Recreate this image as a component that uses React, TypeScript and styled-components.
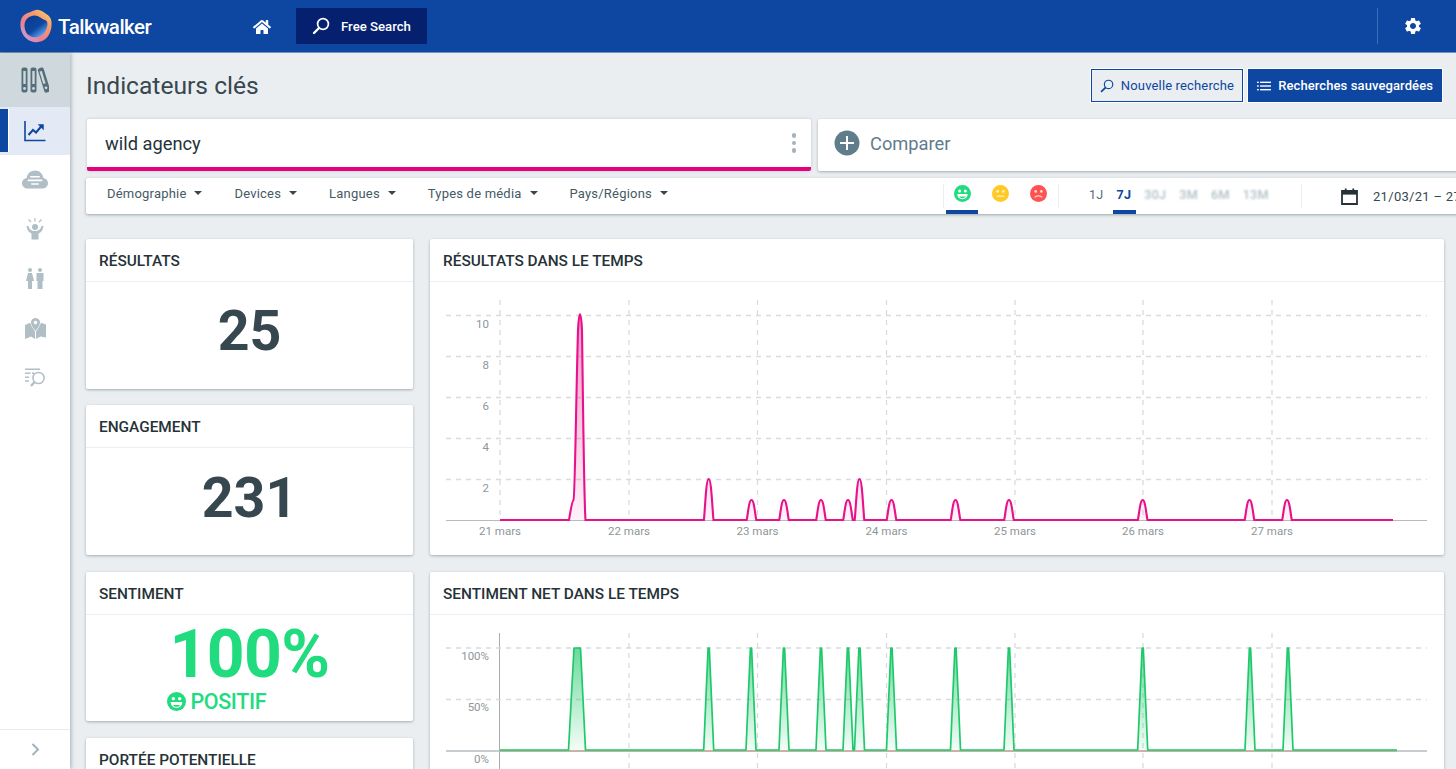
import React from "react";
import styled, { createGlobalStyle } from "styled-components";
import { FaHome } from "react-icons/fa";
import { MdSettings } from "react-icons/md";

const Global = createGlobalStyle`
  html, body { margin: 0; padding: 0; height: 100%; overflow: hidden; }
  body { font-family: Roboto, "Liberation Sans", sans-serif; background: #eaeef1; }
  * { box-sizing: border-box; }
`;

const Page = styled.div`
  width: 1456px;
  height: 769px;
  overflow: hidden;
  display: flex;
  flex-direction: column;
`;
const TopBar = styled.header`
  flex: none;
  height: 53px;
  background: #0d47a1;
  border-bottom: 1px solid #6f93c8;
  display: flex;
  align-items: center;
  color: #fff;
`;
const Brand = styled.div`
  width: 253px;
  display: flex;
  align-items: center;
  padding-left: 20px;
  gap: 6px;
`;
const BrandName = styled.span`
  font-size: 20.5px;
  font-weight: 500;
  letter-spacing: -0.5px;
  margin-top: 1px;
`;
const HomeLink = styled.div`
  width: 43px;
  display: flex;
  margin-top: 1px;
`;
const FreeSearch = styled.div`
  width: 131px;
  height: 36px;
  background: #04206f;
  display: flex;
  align-items: center;
  padding-left: 16px;
  gap: 11px;
  font-size: 13.2px;
  font-weight: 500;
`;
const TopRight = styled.div`
  margin-left: auto;
  width: 79px;
  height: 36px;
  border-left: 1px solid #3b6fbd;
  display: flex;
  align-items: center;
  padding-left: 25px;
`;
const Body = styled.div`
  flex: 1;
  display: flex;
  min-height: 0;
`;
const Sidebar = styled.nav`
  flex: none;
  width: 70px;
  background: #fff;
  box-shadow: 1px 0 4px rgba(60, 75, 85, 0.4);
  display: flex;
  flex-direction: column;
  z-index: 1;
`;
const LibraryItem = styled.div`
  height: 54px;
  background: #cfd8dc;
  display: flex;
  align-items: center;
  justify-content: center;
`;
const NavItem = styled.div<{ $active?: boolean }>`
  position: relative;
  height: ${(p) => (p.$active ? "48px" : "49.5px")};
  background: ${(p) => (p.$active ? "#e3eaf5" : "#fff")};
  display: flex;
  align-items: center;
  justify-content: center;
  ${(p) =>
    p.$active &&
    `&::before { content: ""; position: absolute; left: 0; top: 2px; width: 8px; height: 43px; background: #0d47a1; box-shadow: 1px 0 0 #fff; }`}
`;
const SideFoot = styled.div`
  margin-top: auto;
  height: 40px;
  border-top: 1px solid #e8ebed;
  display: flex;
  align-items: center;
  justify-content: center;
`;
const Main = styled.main`
  flex: 1;
  min-width: 0;
  overflow: hidden;
  padding: 16px 12px 0 16px;
`;
const TitleRow = styled.div`
  display: flex;
  align-items: center;
  justify-content: space-between;
  height: 33px;
  padding-right: 2px;
`;
const Title = styled.h1`
  margin: 0;
  font-size: 24.6px;
  font-weight: 400;
  color: #37474f;
`;
const Actions = styled.div`
  display: flex;
  gap: 5px;
`;
const ActionButton = styled.div<{ $solid?: boolean }>`
  height: 33px;
  display: flex;
  align-items: center;
  gap: 7px;
  padding: 0 8px;
  font-size: 13px;
  letter-spacing: ${(p) => (p.$solid ? "0.1px" : "0.15px")};
  font-weight: ${(p) => (p.$solid ? 500 : 400)};
  color: ${(p) => (p.$solid ? "#fff" : "#0d47a1")};
  background: ${(p) => (p.$solid ? "#0d47a1" : "transparent")};
  border: 1px solid #0d47a1;
  box-shadow: 0 0 0 1px #fff;
`;
const QueryRow = styled.div`
  margin-top: 17px;
  width: 1500px;
  display: flex;
  gap: 7px;
  padding-left: 1px;
`;
const QueryCard = styled.div`
  width: 724px;
  height: 52px;
  background: #fff;
  border-bottom: 4px solid #e6007e;
  border-radius: 2px;
  box-shadow: 0 0 3px rgba(60, 75, 85, 0.25);
  display: flex;
  align-items: center;
  justify-content: space-between;
  padding: 0 15px 0 18px;
  font-size: 18.3px;
  color: #263238;
`;
const Dots = styled.div`
  display: flex;
  flex-direction: column;
  gap: 3px;
  & > i { display: block; width: 4.5px; height: 4.5px; border-radius: 50%; background: #a3b3bc; }
`;
const CompareCard = styled.div`
  flex: 1;
  height: 52px;
  background: #fff;
  border-radius: 2px;
  box-shadow: 0 1px 3px rgba(60, 75, 85, 0.4);
  display: flex;
  align-items: center;
  gap: 10px;
  padding: 0 0 4px 16px;
  font-size: 18.3px;
  color: #607d8b;
`;
const FilterBar = styled.div`
  margin-top: 7px;
  width: 1500px;
  height: 36px;
  background: #fff;
  border-radius: 2px;
  box-shadow: 0 1px 3px rgba(60, 75, 85, 0.45);
  display: flex;
  align-items: stretch;
`;
const FilterList = styled.div`
  width: 857px;
  padding: 0 0 6px 21px;
  display: flex;
  align-items: center;
  gap: 32px;
`;
const Filter = styled.div`
  display: flex;
  align-items: center;
  gap: 8px;
  font-size: 13px;
  letter-spacing: 0.2px;
  color: #455a64;
  &::after {
    content: "";
    border-left: 4px solid transparent;
    border-right: 4px solid transparent;
    border-top: 4.5px solid #37474f;
  }
`;
const Section = styled.div<{ $w: number; $divider?: boolean }>`
  width: ${(p) => p.$w}px;
  display: flex;
  align-items: center;
  position: relative;
  ${(p) => p.$divider && `&::before { content: ""; position: absolute; left: 0; top: 6px; bottom: 6px; width: 1px; background: #eceff1; }`}
`;
const Smiley = styled.div<{ $on?: boolean }>`
  position: relative;
  width: 38px;
  height: 100%;
  display: flex;
  align-items: center;
  justify-content: center;
  padding-bottom: 6px;
  ${(p) =>
    p.$on &&
    `&::after { content: ""; position: absolute; left: 3px; right: 3px; bottom: 0; height: 4px; background: #0d47a1; }`}
`;
const Range = styled.div<{ $on?: boolean; $off?: boolean }>`
  position: relative;
  height: 100%;
  display: flex;
  align-items: center;
  padding-bottom: 4px;
  font-size: 12.5px;
  letter-spacing: 0.3px;
  font-weight: ${(p) => (p.$on ? 700 : p.$off ? 500 : 400)};
  color: ${(p) => (p.$on ? "#0d47a1" : p.$off ? "#b0bec5" : "#546e7a")};
  ${(p) =>
    p.$on &&
    `&::after { content: ""; position: absolute; left: -4px; right: -5px; bottom: 0; height: 4px; background: #0d47a1; }`}
`;
const BlurText = styled.span`
  filter: blur(1px);
`;
const Ranges = styled.div`
  height: 100%;
  display: flex;
  gap: 13px;
  padding-left: 31px;
`;
const DateText = styled.span`
  font-size: 13px;
  letter-spacing: 0.3px;
  color: #37474f;
  margin-left: 15px;
  margin-top: 1px;
  white-space: nowrap;
`;
const DateBox = styled(Section)`
  padding-left: 40px;
`;
const Dashboard = styled.div`
  margin-top: 25px;
  display: grid;
  grid-template-columns: 327px 1014px;
  column-gap: 17px;
  align-items: start;
`;
const Column = styled.div`
  display: flex;
  flex-direction: column;
  gap: 16.67px;
`;
const Card = styled.section<{ $h: number }>`
  height: ${(p) => p.$h}px;
  background: #fff;
  border-radius: 2px;
  box-shadow: 0 1px 3px rgba(60, 75, 85, 0.4);
  display: flex;
  flex-direction: column;
  overflow: hidden;
`;
const CardHead = styled.h2`
  flex: none;
  margin: 0;
  height: 43px;
  padding: 2px 13px 0;
  display: flex;
  align-items: center;
  border-bottom: 1px solid #eceff1;
  font-size: 15.4px;
  font-weight: 500;
  color: #263238;
  white-space: nowrap;
`;
const Metric = styled.div`
  flex: 1;
  display: flex;
  align-items: center;
  justify-content: center;
  padding-bottom: 7px;
  font-size: 55.5px;
  font-weight: 700;
  color: #37474f;
`;
const SentimentBody = styled.div`
  flex: 1;
  display: flex;
  justify-content: center;
`;
const SentimentStack = styled.div`
  color: #21dc7f;
  display: flex;
  flex-direction: column;
`;
const SentimentValue = styled.div`
  font-size: 66px;
  font-weight: 700;
  line-height: 68px;
  margin-top: 6px;
  letter-spacing: -0.6px;
`;
const SentimentLabel = styled.div`
  display: flex;
  align-items: center;
  gap: 5px;
  margin: 0 0 0 -3px;
  font-size: 21.5px;
  font-weight: 500;
  line-height: 26px;
  letter-spacing: -0.4px;
`;
const ChartSvg = styled.svg`
  display: block;
  flex: none;
`;
const AxisText = styled.text<{ $anchor?: string }>`
  font-family: Roboto, "Liberation Sans", sans-serif;
  font-size: 11.5px;
  fill: #8e9698;
  text-anchor: ${(p) => p.$anchor || "end"};
`;

const gridX = [500, 629, 757.5, 886.5, 1015, 1143, 1272];
const xLabels = ["21 mars", "22 mars", "23 mars", "24 mars", "25 mars", "26 mars", "27 mars"];

function bell(x: number, top: number, base: number) {
  const h = base - top;
  return `L${x - 4.8} ${base} C${x - 3.4} ${base - h * 0.35},${x - 2.6} ${top},${x} ${top} C${x + 2.6} ${top},${x + 3.4} ${base - h * 0.35},${x + 4.8} ${base} `;
}
function spike(x: number, top: number, base: number) {
  return `L${x - 5} ${base} C${x - 3.6} ${base - 30},${x - 1.6} ${top + 18},${x - 0.6} ${top} L${x + 0.6} ${top} C${x + 1.6} ${top + 18},${x + 3.6} ${base - 30},${x + 5} ${base} `;
}

const pinkBase = 520;
const pinkPeaks: [number, number][] = [
  [708.7, 479], [751.5, 500], [784, 500], [821, 500], [848, 500], [859.5, 479],
  [891.5, 500], [955.5, 500], [1009, 500], [1142.7, 500], [1249.5, 500], [1287, 500],
];
const pinkPath =
  `M500 ${pinkBase} L569 ${pinkBase} C571 508,572 501,573.5 500 C575 498,576 400,578 330 C579 309,581 309,582 330 C583 400,584 500,585.5 ${pinkBase} ` +
  pinkPeaks.map(([x, t]) => bell(x, t, pinkBase)).join("") +
  `L1393 ${pinkBase}`;

const greenBase = 750;
const greenPeaks = [708.7, 751, 784, 821, 848, 859.5, 891.5, 955.5, 1009, 1142.7, 1250, 1288];
const greenPath =
  `M500 ${greenBase} L568.5 ${greenBase} L574 648 L580.5 648 L585.5 ${greenBase} ` +
  greenPeaks.map((x) => spike(x, 648, greenBase)).join("") +
  `L1397 ${greenBase}`;

const GridLine: React.FC<{ x1: number; y1: number; x2: number; y2: number }> = (p) => (
  <line {...p} stroke="#d8dcde" strokeWidth={1.3} strokeDasharray="5 5" />
);

const ResultsChart = () => (
  <ChartSvg width={1014} height={273} viewBox="430 282 1014 273">
    <defs>
      <linearGradient id="pinkFill" x1="0" y1="0" x2="0" y2="1">
        <stop offset="0" stopColor="#e6007e" stopOpacity={0.4} />
        <stop offset="1" stopColor="#e6007e" stopOpacity={0.05} />
      </linearGradient>
    </defs>
    {gridX.map((x) => (
      <GridLine key={x} x1={x} y1={300} x2={x} y2={520} />
    ))}
    {[315.5, 356.5, 397.5, 438.5, 479.5].map((y) => (
      <GridLine key={y} x1={446} y1={y} x2={1427} y2={y} />
    ))}
    <line x1={446} y1={520.5} x2={1427} y2={520.5} stroke="#b4bcc0" strokeWidth={1.2} />
    {["10", "8", "6", "4", "2"].map((t, i) => (
      <AxisText key={t} x={489} y={327.5 + i * 41}>{t}</AxisText>
    ))}
    {gridX.map((x, i) => (
      <AxisText key={x} x={x} y={535} $anchor="middle">{xLabels[i]}</AxisText>
    ))}
    <path d={pinkPath + ` L500 ${pinkBase} Z`} fill="url(#pinkFill)" />
    <path d={pinkPath} fill="none" stroke="#e9118a" strokeWidth={2.1} />
  </ChartSvg>
);

const SentimentChart = () => (
  <ChartSvg width={1014} height={273} viewBox="430 615 1014 273">
    <defs>
      <linearGradient id="greenFill" gradientUnits="userSpaceOnUse" x1="0" y1="648" x2="0" y2="750">
        <stop offset="0" stopColor="#1bc667" stopOpacity={0.65} />
        <stop offset="1" stopColor="#1bc667" stopOpacity={0.05} />
      </linearGradient>
    </defs>
    {gridX.slice(1).map((x) => (
      <GridLine key={x} x1={x} y1={633} x2={x} y2={800} />
    ))}
    <line x1={499.5} y1={633} x2={499.5} y2={800} stroke="#a3adb1" strokeWidth={1} />
    {[648, 699.5].map((y) => (
      <GridLine key={y} x1={446} y1={y} x2={1427} y2={y} />
    ))}
    <line x1={446} y1={751} x2={1427} y2={751} stroke="#b4bcc0" strokeWidth={1.4} />
    <line x1={500} y1={751} x2={1397} y2={751} stroke="#c98a6a" strokeWidth={0.8} />
    <AxisText x={489} y={660}>100%</AxisText>
    <AxisText x={489} y={711}>50%</AxisText>
    <AxisText x={489} y={763}>0%</AxisText>
    <path d={greenPath + ` L500 ${greenBase} Z`} fill="url(#greenFill)" />
    <path d={greenPath} fill="none" stroke="#1ec96b" strokeWidth={1.7} strokeLinejoin="round" />
  </ChartSvg>
);

const Logo = () => (
  <svg width="32" height="34" viewBox="0 0 32 34">
    <defs>
      <linearGradient id="logoRing" x1="1" y1="0" x2="0.1" y2="1">
        <stop offset="0" stopColor="#f6d977" />
        <stop offset="0.35" stopColor="#f59a6a" />
        <stop offset="0.65" stopColor="#ef7f8e" />
        <stop offset="1" stopColor="#b9a6e8" />
      </linearGradient>
      <linearGradient id="logoIn" x1="0.1" y1="0.1" x2="0.8" y2="1">
        <stop offset="0" stopColor="#0b3d91" />
        <stop offset="0.55" stopColor="#0d47a1" />
        <stop offset="0.85" stopColor="#4d8fe0" />
        <stop offset="1" stopColor="#8fc0f2" />
      </linearGradient>
    </defs>
    <path d="M16 1C20 0 23 3 27 5.5C31 8 32 12 31.5 17C31 22 29 28 24 31C19 34 12 34 7 30C2 26 0 20 .5 14C1 8 4 5 9 3.5C11 3 13 1.5 16 1Z" fill="url(#logoRing)" />
    <path d="M14 6.5C18 6 21 9.5 25 11C27.5 12 28 15 27 18C26 22 23 27 18 28C13 29 8 27 6 23C4 19 4 14 6 11C8 8 11 7 14 6.5Z" fill="url(#logoIn)" />
  </svg>
);

const Magnifier: React.FC<{ size: number; color: string; sw: number }> = ({ size, color, sw }) => (
  <svg width={size} height={size} viewBox="0 0 18 18" fill="none" stroke={color} strokeWidth={sw} strokeLinecap="round">
    <circle cx="11" cy="7" r="5.4" />
    <path d="M7 11 L2 16" strokeWidth={sw + 0.7} />
  </svg>
);

const ListIcon = () => (
  <svg width="14" height="12" viewBox="0 0 16 12" fill="#fff">
    <rect x="0" y="1" width="2" height="1.6" />
    <rect x="3.5" y="1" width="12.5" height="1.6" />
    <rect x="0" y="5.2" width="2" height="1.6" />
    <rect x="3.5" y="5.2" width="12.5" height="1.6" />
    <rect x="0" y="9.4" width="2" height="1.6" />
    <rect x="3.5" y="9.4" width="12.5" height="1.6" />
  </svg>
);

const BooksIcon = () => (
  <svg width="28" height="26" viewBox="0 0 28 26">
    <g fill="#546e7a">
      <rect x="0.5" y="0.5" width="6" height="25" rx="2" />
      <rect x="9.5" y="0.5" width="6" height="25" rx="2" />
      <rect x="20" y="0.3" width="6" height="25.5" rx="2" transform="rotate(-17 23 13)" />
    </g>
    <g fill="#cfd8dc">
      <rect x="2.3" y="4" width="2.4" height="13" />
      <rect x="11.3" y="4" width="2.4" height="13" />
      <rect x="20.2" y="4" width="2.4" height="13" transform="rotate(-17 21.4 10)" />
      <circle cx="3.5" cy="21.5" r="1.4" />
      <circle cx="12.5" cy="21.5" r="1.4" />
      <circle cx="25" cy="20.8" r="1.4" />
    </g>
  </svg>
);
const TrendIcon = () => (
  <svg width="22" height="21" viewBox="0 0 22 21" fill="none" stroke="#0d47a1">
    <path d="M1 0V19.5H21.5" strokeWidth="1.6" />
    <path d="M4.5 14L9 9L12 11.5L18 4.5" strokeWidth="2" />
    <path d="M14.2 3.5H19.5V8.8Z" fill="#0d47a1" strokeWidth="0.5" />
  </svg>
);
const CloudIcon = () => (
  <svg width="26" height="19" viewBox="0 0 26 19">
    <path d="M6 18.5C2.5 18.5 0 16.2 0 13.2C0 10.4 2 8.5 4.6 8C5.3 3.4 8.8 0.5 13 0.5C17.2 0.5 20.5 3.2 21.4 8C24 8.5 26 10.4 26 13.2C26 16.2 23.5 18.5 20 18.5Z" fill="#b0bec5" />
    <g fill="#fff">
      <rect x="8" y="6" width="10" height="1.6" rx="0.8" />
      <rect x="5.5" y="9.6" width="15" height="1.6" rx="0.8" />
      <rect x="9" y="13.2" width="8" height="1.6" rx="0.8" />
    </g>
  </svg>
);
const CheerIcon = () => (
  <svg width="20" height="22" viewBox="0 0 20 22" fill="#b0bec5">
    <circle cx="10" cy="9" r="3" />
    <path d="M1.5 8C2 12 4 14.5 6.5 15.5V21.5H13.5V15.5C16 14.5 18 12 18.5 8L16.5 8C16 11 13.5 13 10 13C6.5 13 4 11 3.5 8Z" />
    <g stroke="#b0bec5" strokeWidth="1.2" fill="none">
      <path d="M10 0V3.5" />
      <path d="M3.5 1.5L6 4" />
      <path d="M16.5 1.5L14 4" />
    </g>
  </svg>
);
const PeopleIcon = () => (
  <svg width="20" height="21" viewBox="0 0 20 21" fill="#b0bec5">
    <circle cx="5" cy="2" r="2" />
    <circle cx="15" cy="2" r="2" />
    <path d="M3 5H7L9 13H7V21H3V13H1Z" />
    <path d="M11.5 5H18.5V13H17.5V21H12.5V13H11.5Z" />
  </svg>
);
const MapIcon = () => (
  <svg width="21" height="21" viewBox="0 0 21 21" fill="#b0bec5">
    <path d="M0 7L5 4.8L7 9L10 13.5V21L6 18.5L0 21Z" />
    <path d="M11 13.5L14 9L16 4.8L21 6.5V19.5L15.5 18.5L11 21Z" />
    <path fillRule="evenodd" d="M10.5 0C13.5 0 15 2.2 15 4.5C15 7.5 12 11 10.5 13C9 11 6 7.5 6 4.5C6 2.2 7.5 0 10.5 0ZM10.5 2.8A1.8 1.8 0 1 0 10.5 6.4A1.8 1.8 0 1 0 10.5 2.8Z" />
  </svg>
);
const ListSearchIcon = () => (
  <svg width="22" height="20" viewBox="0 0 22 20" fill="none" stroke="#b0bec5">
    <path d="M1 1.2H16M1 5.2H6.5M8 5.2H10M1 9.2H5M1 13H5" strokeWidth="1.5" />
    <circle cx="14.5" cy="10" r="5.6" strokeWidth="1.5" />
    <path d="M10.5 14L7 18" strokeWidth="2.4" />
  </svg>
);
const ChevronIcon = () => (
  <svg width="9" height="13" viewBox="0 0 9 13" fill="none" stroke="#a3b3bc" strokeWidth="2">
    <path d="M1.5 1L7 6.5L1.5 12" />
  </svg>
);
const PlusIcon = () => (
  <svg width="26" height="26" viewBox="0 0 26 26">
    <circle cx="13" cy="13" r="12.5" fill="#607d8b" />
    <path d="M13 6V20M6 13H20" stroke="#fff" strokeWidth="2" />
  </svg>
);
const SmileFace: React.FC<{ color: string; size?: number }> = ({ color, size = 17 }) => (
  <svg width={size} height={size} viewBox="0 0 18 18">
    <circle cx="9" cy="9" r="9" fill={color} />
    <circle cx="6" cy="6.3" r="1.6" fill="#fff" />
    <circle cx="12" cy="6.3" r="1.6" fill="#fff" />
    <path d="M3.5 9.5H14.5C14.5 12.8 12 15 9 15C6 15 3.5 12.8 3.5 9.5Z" fill="#fff" />
    <path d="M5.5 12.2H12.5C11.6 13.4 10.4 14 9 14C7.6 14 6.4 13.4 5.5 12.2Z" fill={color} />
  </svg>
);
const NeutralFace = () => (
  <svg width="17" height="17" viewBox="0 0 18 18">
    <circle cx="9" cy="9" r="9" fill="#ffca28" />
    <circle cx="6" cy="6.8" r="1.4" fill="#fff3c4" />
    <circle cx="12" cy="6.8" r="1.4" fill="#fff3c4" />
    <rect x="5" y="11.2" width="8" height="1.3" fill="#fff3c4" />
  </svg>
);
const SadFace = () => (
  <svg width="17" height="17" viewBox="0 0 18 18">
    <circle cx="9" cy="9" r="9" fill="#ff5252" />
    <circle cx="6" cy="6.8" r="1.4" fill="#ffdcdc" />
    <circle cx="12" cy="6.8" r="1.4" fill="#ffdcdc" />
    <path d="M5 13.2C6.5 10.8 11.5 10.8 13 13.2" fill="none" stroke="#ffdcdc" strokeWidth="1.3" />
  </svg>
);
const CalendarIcon = () => (
  <svg width="17" height="17" viewBox="0 0 17 17">
    <path d="M1 3H16V16H1Z" fill="none" stroke="#263238" strokeWidth="1.8" />
    <rect x="1" y="3" width="15" height="3.6" fill="#263238" />
    <rect x="3.8" y="0.5" width="1.8" height="3" fill="#263238" />
    <rect x="11.4" y="0.5" width="1.8" height="3" fill="#263238" />
  </svg>
);

export default function App() {
  return (
    <Page>
      <Global />
      <TopBar>
        <Brand>
          <Logo />
          <BrandName>Talkwalker</BrandName>
        </Brand>
        <HomeLink><FaHome size={18} color="#fff" /></HomeLink>
        <FreeSearch>
          <Magnifier size={18} color="#fff" sw={1.7} />
          Free Search
        </FreeSearch>
        <TopRight>
          <MdSettings size={20} color="#fff" />
        </TopRight>
      </TopBar>
      <Body>
        <Sidebar>
          <LibraryItem><BooksIcon /></LibraryItem>
          <NavItem $active><TrendIcon /></NavItem>
          <NavItem><CloudIcon /></NavItem>
          <NavItem><CheerIcon /></NavItem>
          <NavItem><PeopleIcon /></NavItem>
          <NavItem><MapIcon /></NavItem>
          <NavItem><ListSearchIcon /></NavItem>
          <SideFoot><ChevronIcon /></SideFoot>
        </Sidebar>
        <Main>
          <TitleRow>
            <Title>Indicateurs clés</Title>
            <Actions>
              <ActionButton>
                <Magnifier size={14} color="#0d47a1" sw={1.5} />
                Nouvelle recherche
              </ActionButton>
              <ActionButton $solid>
                <ListIcon />
                Recherches sauvegardées
              </ActionButton>
            </Actions>
          </TitleRow>
          <QueryRow>
            <QueryCard>
              wild agency
              <Dots><i /><i /><i /></Dots>
            </QueryCard>
            <CompareCard>
              <PlusIcon />
              Comparer
            </CompareCard>
          </QueryRow>
          <FilterBar>
            <FilterList>
              <Filter>Démographie</Filter>
              <Filter>Devices</Filter>
              <Filter>Langues</Filter>
              <Filter>Types de média</Filter>
              <Filter>Pays/Régions</Filter>
            </FilterList>
            <Section $w={115} $divider>
              <Smiley $on><SmileFace color="#21dc7f" /></Smiley>
              <Smiley><NeutralFace /></Smiley>
              <Smiley><SadFace /></Smiley>
            </Section>
            <Section $w={243} $divider>
              <Ranges>
                <Range>1J</Range>
                <Range $on>7J</Range>
                <Range $off><BlurText>30J</BlurText></Range>
                <Range $off><BlurText>3M</BlurText></Range>
                <Range $off><BlurText>6M</BlurText></Range>
                <Range $off><BlurText>13M</BlurText></Range>
              </Ranges>
            </Section>
            <DateBox $w={240} $divider>
              <CalendarIcon />
              <DateText>21/03/21 – 27/03/21</DateText>
            </DateBox>
          </FilterBar>
          <Dashboard>
            <Column>
              <Card $h={149.67}>
                <CardHead>RÉSULTATS</CardHead>
                <Metric>25</Metric>
              </Card>
              <Card $h={149.67}>
                <CardHead>ENGAGEMENT</CardHead>
                <Metric>231</Metric>
              </Card>
              <Card $h={149.67}>
                <CardHead>SENTIMENT</CardHead>
                <SentimentBody>
                  <SentimentStack>
                    <SentimentValue>100%</SentimentValue>
                    <SentimentLabel>
                      <SmileFace color="#21dc7f" size={19} />
                      POSITIF
                    </SentimentLabel>
                  </SentimentStack>
                </SentimentBody>
              </Card>
              <Card $h={149.67}>
                <CardHead>PORTÉE POTENTIELLE</CardHead>
              </Card>
            </Column>
            <Column>
              <Card $h={316}>
                <CardHead>RÉSULTATS DANS LE TEMPS</CardHead>
                <ResultsChart />
              </Card>
              <Card $h={316}>
                <CardHead>SENTIMENT NET DANS LE TEMPS</CardHead>
                <SentimentChart />
              </Card>
            </Column>
          </Dashboard>
        </Main>
      </Body>
    </Page>
  );
}
